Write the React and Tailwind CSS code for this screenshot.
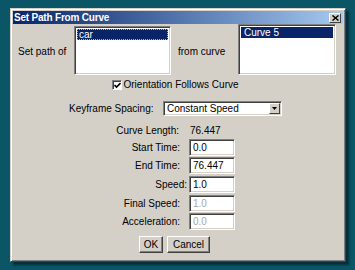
import React from "react";

const font = { fontFamily: '"Liberation Sans", Arial, sans-serif' };

function Field({ value, disabled }) {
  return (
    <div className="w-[46px] h-[17px] bg-white border border-t-[#808080] border-l-[#808080] border-r-white border-b-white shadow-[inset_1px_1px_0_#404040,inset_-1px_-1px_0_#d4d0c8] pl-[3px] flex items-center">
      <span className={disabled ? "text-[#a8a8a8]" : "text-black"}>{value}</span>
    </div>
  );
}

function Row({ label, value, disabled, mt, labelPr = "pr-[9px]" }) {
  return (
    <div className={`flex items-center h-[17px] ${mt}`}>
      <div className={`w-[176px] flex justify-end ${labelPr}`}>{label}</div>
      <Field value={value} disabled={disabled} />
    </div>
  );
}

function Button({ children, w }) {
  return (
    <div
      className={`${w} h-[17px] flex items-center justify-center border border-t-white border-l-white border-r-[#404040] border-b-[#404040] shadow-[inset_-1px_-1px_0_#808080] bg-[#d4d0c8]`}
    >
      {children}
    </div>
  );
}

export default function App() {
  return (
    <div
      className="w-[355px] h-[270px] bg-[#0a5566] pl-[10px] pt-[8px] text-[10px] leading-none text-black"
      style={font}
    >
      <div className="w-[336px] h-[254px] bg-[#d4d0c8] border border-t-[#d4d0c8] border-l-[#d4d0c8] border-r-[#404040] border-b-[#404040] shadow-[inset_1px_1px_0_#fff,inset_-1px_-1px_0_#808080,3px_3px_2px_rgba(0,20,30,0.6)] p-[2px] flex flex-col">
        {/* Title bar */}
        <div className="h-[13px] flex items-center justify-between bg-gradient-to-r from-[#0a246a] to-[#a6caf0] pl-[1px] pr-[2px]">
          <span className="text-white font-bold text-[10px] tracking-[-0.2px]">Set Path From Curve</span>
          <div className="w-[12px] h-[10px] bg-[#d4d0c8] border border-t-white border-l-white border-r-[#404040] border-b-[#404040] flex items-center justify-center">
            <svg width="7" height="6" viewBox="0 0 7 6">
              <path d="M0.5 0.5 L6.5 5.5 M6.5 0.5 L0.5 5.5" stroke="#000" strokeWidth="1.5" />
            </svg>
          </div>
        </div>

        {/* Lists row */}
        <div className="flex items-end h-[51px] pl-[5px]">
          <div className="w-[56px] self-center pt-[4px]">Set path of</div>
          <div className="w-[97px] h-[49px] bg-white border border-t-[#808080] border-l-[#808080] border-r-white border-b-white shadow-[inset_1px_1px_0_#404040,inset_-1px_-1px_0_#d4d0c8] p-[2px]">
            <div className="h-[11px] bg-[#0a246a] text-white border border-dotted border-[#c8b878] flex items-center pl-[1px]">
              car
            </div>
          </div>
          <div className="w-[67px] self-center pt-[4px] pl-[7px]">from curve</div>
          <div className="w-[98px] h-[51px] bg-white border border-t-[#808080] border-l-[#808080] border-r-white border-b-white shadow-[inset_1px_1px_0_#404040,inset_-1px_-1px_0_#d4d0c8] p-[2px]">
            <div className="h-[11px] bg-[#0a246a] text-white flex items-center pl-[3px]">Curve 5</div>
          </div>
        </div>

        {/* Checkbox */}
        <div className="flex items-center mt-[5px] h-[10px] pl-[99px]">
          <div className="w-[10px] h-[10px] bg-white border border-t-[#808080] border-l-[#808080] border-r-white border-b-white shadow-[inset_1px_1px_0_#404040] flex items-center justify-center">
            <svg width="7" height="7" viewBox="0 0 7 7">
              <path d="M0.5 3 L2.5 5 L6.5 1" stroke="#000" strokeWidth="1.6" fill="none" />
            </svg>
          </div>
          <span className="ml-[1.5px]">Orientation Follows Curve</span>
        </div>

        {/* Keyframe spacing */}
        <div className="flex items-center mt-[11px] h-[15px] pl-[56px]">
          <div className="w-[94px]">Keyframe Spacing:</div>
          <div className="w-[119px] h-[15px] bg-white border border-t-[#808080] border-l-[#808080] border-r-white border-b-white shadow-[inset_1px_1px_0_#404040,inset_-1px_-1px_0_#d4d0c8] flex items-center justify-between pl-[3px] pr-[1px]">
            <span>Constant Speed</span>
            <div className="w-[11px] h-[11px] bg-[#d4d0c8] border border-t-white border-l-white border-r-[#404040] border-b-[#404040] flex items-center justify-center">
              <svg width="5" height="3" viewBox="0 0 5 3">
                <path d="M0 0 H5 L2.5 3 Z" fill="#000" />
              </svg>
            </div>
          </div>
        </div>

        {/* Curve length */}
        <div className="flex items-center mt-[8px] h-[14px]">
          <div className="w-[176px] flex justify-end pr-[10px]">Curve Length:</div>
          <span className="pl-[1px]">76.447</span>
        </div>

        <Row label="Start Time:" value="0.0" mt="mt-[1px]" />
        <Row label="End Time:" value="76.447" mt="mt-[1px]" />
        <Row label="Speed:" value="1.0" mt="mt-[2px]" labelPr="pr-[2px]" />
        <Row label="Final Speed:" value="1.0" disabled mt="mt-[2px]" />
        <Row label="Acceleration:" value="0.0" disabled mt="mt-[1px]" />

        {/* Buttons */}
        <div className="flex mt-[6px] pl-[126px] gap-[4px]">
          <Button w="w-[24px]">OK</Button>
          <Button w="w-[43px]">Cancel</Button>
        </div>
      </div>
    </div>
  );
}
